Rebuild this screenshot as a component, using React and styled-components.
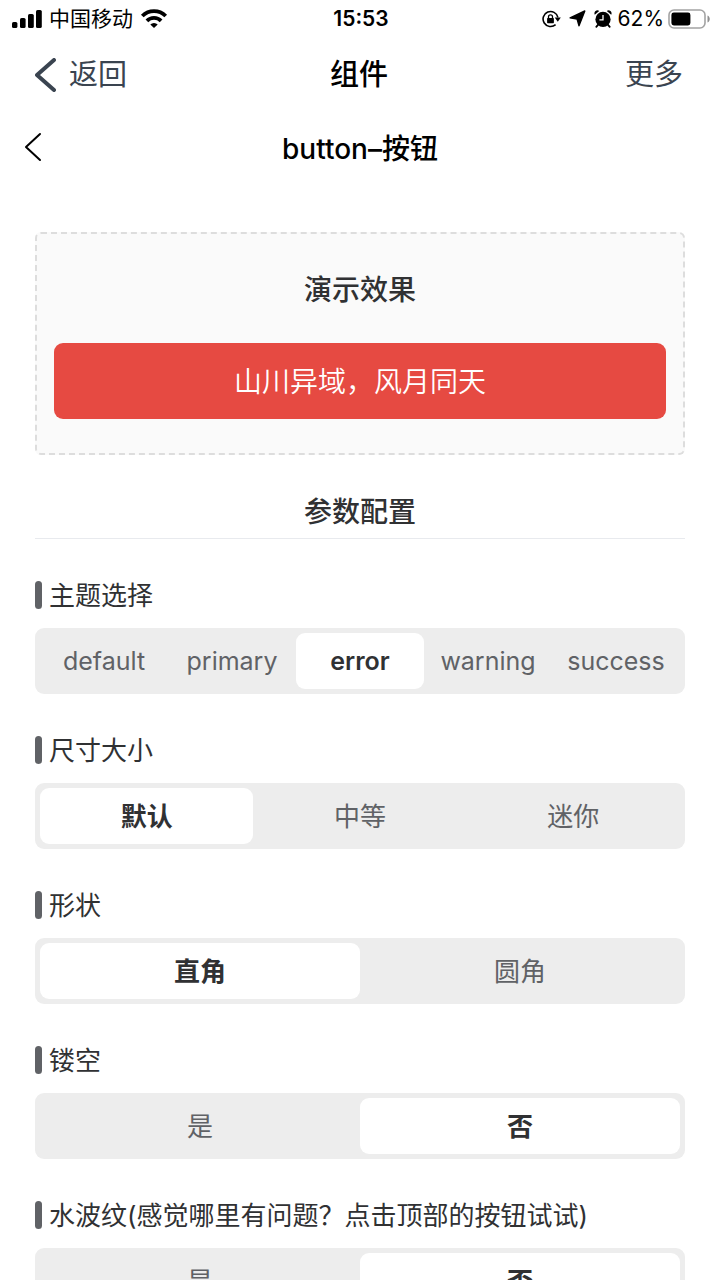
import React from "react";
import styled, { createGlobalStyle } from "styled-components";

const GlobalStyle = createGlobalStyle`
  *, *::before, *::after { box-sizing: border-box; }
  html { scrollbar-width: none; }
  html::-webkit-scrollbar { display: none; }
  body {
    margin: 0;
    background: #fff;
    color: #303133;
    font-family: Inter, "Noto Sans CJK SC", sans-serif;
    font-size: 26px;
    overflow-x: hidden;
  }
  button { font: inherit; color: inherit; border: 0; background: none; padding: 0; cursor: pointer; }
`;

const StatusBar = styled.div`
  display: grid;
  grid-template-columns: 1fr auto 1fr;
  align-items: center;
  height: 37px;
  padding: 0 10px 0 12px;
  color: #000;
  font-size: 21px;
  line-height: 30px;
`;

const StatusGroup = styled.div`
  display: flex;
  align-items: center;
  justify-content: ${(p) => (p.$end ? "flex-end" : "flex-start")};
  gap: ${(p) => (p.$end ? "4px" : "7px")};
  svg { display: block; flex: none; }
`;

const StatusIcons = styled.span`
  display: flex;
  align-items: center;
  gap: 8px;
  margin-right: 2px;
`;

const Clock = styled.time`
  font-weight: 600;
`;

const NavBar = styled.header`
  display: grid;
  grid-template-columns: 1fr auto 1fr;
  align-items: center;
  height: 74px;
  padding: 2px 37px 0 35px;
  font-size: 29px;
  line-height: 40px;
`;

const NavButton = styled.button`
  display: flex;
  align-items: center;
  gap: 13px;
  justify-self: ${(p) => (p.$end ? "end" : "start")};
  && { color: #3a4450; }
`;

const NavTitle = styled.h1`
  margin: 0;
  color: #000;
  font-size: 29px;
  font-weight: 500;
`;

const PageHeader = styled.div`
  display: grid;
  grid-template-columns: 1fr auto 1fr;
  align-items: center;
  height: 75px;
  padding: 0 24px;
`;

const BackButton = styled.button`
  justify-self: start;
  && { color: #000; }
  svg { display: block; margin-bottom: 4px; }
`;

const PageTitle = styled.h2`
  margin: 0;
  color: #000;
  font-size: 28px;
  line-height: 40px;
  font-weight: 500;
`;

const Content = styled.main`
  padding: 46px 35px 42px;
`;

const Demo = styled.section`
  padding: 36px 17px 34px;
  border: 2px dashed #ddd;
  border-radius: 6px;
  background: #fafafa;
`;

const SectionTitle = styled.h3`
  margin: 0;
  font-size: 28px;
  line-height: 40px;
  font-weight: 500;
  text-align: center;
`;

const DemoButton = styled.button`
  && {
    display: block;
    width: 100%;
    height: 76px;
    margin-top: 33px;
    padding-bottom: 2px;
    border-radius: 9px;
    background: #e64a42;
    color: #fff;
    font-size: 28px;
    font-weight: 350;
  }
`;

const ConfigHeading = styled.div`
  margin-top: 37px;
  padding-bottom: 6px;
  border-bottom: 1px solid #e8eaee;
`;

const Field = styled.fieldset`
  min-width: 0;
  margin: 42px 0 0;
  padding: 0;
  border: 0;
`;

const FieldLabel = styled.legend`
  display: flex;
  align-items: center;
  gap: 7px;
  height: 28px;
  margin-bottom: 19px;
  padding: 0;
  font-size: 26px;
  line-height: 28px;
  white-space: nowrap;
  &::before {
    content: "";
    width: 7px;
    height: 28px;
    border-radius: 4px;
    background: #606266;
  }
`;

const Segments = styled.div`
  display: flex;
  padding: 5px;
  border-radius: 9px;
  background: #ededed;
`;

const Segment = styled.label`
  flex: 1 1 0;
  min-width: 0;
  height: 56px;
  border-radius: 9px;
  color: #606266;
  font-size: ${(p) => (p.$latin ? "25px" : "26px")};
  line-height: ${(p) => (p.$latin ? "56px" : "58px")};
  text-align: center;
  cursor: pointer;
  &:has(input:checked) {
    background: #fff;
    color: #303133;
    font-weight: ${(p) => (p.$latin ? 600 : 700)};
  }
`;

const Radio = styled.input`
  appearance: none;
  width: 0;
  height: 0;
  margin: 0;
  display: block;
`;

const SignalIcon = () => (
  <svg width="30" height="18" viewBox="0 0 30 18" aria-hidden="true">
    <rect x="0" y="12" width="5.4" height="6" rx="1.6" />
    <rect x="8" y="8" width="5.6" height="10" rx="1.6" />
    <rect x="16" y="4" width="5.8" height="14" rx="1.6" />
    <rect x="24" y="0" width="5.8" height="18" rx="1.6" />
  </svg>
);

const WifiIcon = () => (
  <svg width="28" height="19" viewBox="0 0 28 19" fill="none" stroke="#000" strokeWidth="3.8" aria-hidden="true">
    <path d="M2.3 7a16.6 16.6 0 0 1 23.4 0" />
    <path d="M6.9 11.8a10 10 0 0 1 14.2 0" />
    <path d="M14 19l-3.7-3.5a5.3 5.3 0 0 1 7.4 0z" fill="#000" stroke="none" />
  </svg>
);

const RotationLockIcon = () => (
  <svg width="19" height="18" viewBox="0 0 19 18" fill="none" stroke="#000" strokeWidth="1.6" aria-hidden="true">
    <path d="M15.9 7.4A7.5 7.5 0 1 0 13.6 14.6" />
    <path d="M12.7 7.6h6.1l-3 4.2z" fill="#000" stroke="none" />
    <rect x="5.1" y="8" width="6.8" height="5.2" rx=".7" fill="#000" stroke="none" />
    <path d="M6.5 8.3V6.8a2 2 0 0 1 4 0v1.5" strokeWidth="1.3" />
  </svg>
);

const LocationIcon = () => (
  <svg width="17" height="17" viewBox="0 0 17 17" aria-hidden="true">
    <path d="M15.8 1 10 15.8 8.1 9 1.1 7.9z" stroke="#000" strokeWidth="1.4" strokeLinejoin="round" />
  </svg>
);

const AlarmIcon = () => (
  <svg width="18" height="18" viewBox="0 0 18 18" aria-hidden="true">
    <path d="M.8 4.7A3 3 0 0 1 5.2.9zM17.2 4.7A3 3 0 0 0 12.8.9z" />
    <circle cx="9" cy="9.4" r="7.6" />
    <path d="m4.4 14.3-2.1 2.5M13.6 14.3l2.1 2.5" stroke="#000" strokeWidth="1.8" strokeLinecap="round" />
    <path d="M9 5v4.9H5.4" fill="none" stroke="#fff" strokeWidth="1.3" />
  </svg>
);

const BatteryIcon = () => (
  <svg width="42" height="20" viewBox="0 0 42 20" aria-hidden="true">
    <rect x="1" y="1" width="36" height="18" rx="5" fill="none" stroke="#a3a3a3" strokeWidth="1.6" />
    <rect x="3.4" y="3.6" width="19" height="12.8" rx="2.4" />
    <path d="M39.5 6.5c3 1.2 3 5.8 0 7z" fill="#8f8f8f" />
  </svg>
);

const Chevron = ({ width, height, stroke }) => (
  <svg width={width} height={height} fill="none" stroke="currentColor" strokeWidth={stroke} strokeLinecap="round" strokeLinejoin="round" aria-hidden="true">
    <path d={`M${width - 2} 2 2 ${height / 2}l${width - 4} ${height / 2 - 2}`} />
  </svg>
);

const fields = [
  { id: "theme", label: "主题选择", options: ["default", "primary", "error", "warning", "success"], selected: 2, latin: true },
  { id: "size", label: "尺寸大小", options: ["默认", "中等", "迷你"], selected: 0 },
  { id: "shape", label: "形状", options: ["直角", "圆角"], selected: 0 },
  { id: "plain", label: "镂空", options: ["是", "否"], selected: 1 },
  { id: "ripple", label: "水波纹(感觉哪里有问题？点击顶部的按钮试试)", options: ["是", "否"], selected: 1 },
];

const LabelText = styled.span`
  padding-top: 2px;
`;

const SegmentedField = ({ id, label, options, selected, latin }) => (
  <Field>
    <FieldLabel>
      <LabelText>{label}</LabelText>
    </FieldLabel>
    <Segments>
      {options.map((option, i) => (
        <Segment key={option} $latin={latin}>
          <Radio type="radio" name={id} value={option} defaultChecked={i === selected} />
          {option}
        </Segment>
      ))}
    </Segments>
  </Field>
);

export default function App() {
  return (
    <div lang="zh-CN">
      <GlobalStyle />
      <StatusBar>
        <StatusGroup>
          <SignalIcon />
          <span>中国移动</span>
          <WifiIcon />
        </StatusGroup>
        <Clock>15:53</Clock>
        <StatusGroup $end>
          <StatusIcons>
            <RotationLockIcon />
            <LocationIcon />
            <AlarmIcon />
          </StatusIcons>
          <span>62%</span>
          <BatteryIcon />
        </StatusGroup>
      </StatusBar>
      <NavBar>
        <NavButton type="button">
          <Chevron width={21} height={34} stroke={4} />
          返回
        </NavButton>
        <NavTitle>组件</NavTitle>
        <NavButton type="button" $end>更多</NavButton>
      </NavBar>
      <PageHeader>
        <BackButton type="button" aria-label="返回">
          <Chevron width={18} height={30} stroke={2} />
        </BackButton>
        <PageTitle>button–按钮</PageTitle>
      </PageHeader>
      <Content>
        <Demo>
          <SectionTitle>演示效果</SectionTitle>
          <DemoButton type="button">山川异域，风月同天</DemoButton>
        </Demo>
        <ConfigHeading>
          <SectionTitle>参数配置</SectionTitle>
        </ConfigHeading>
        {fields.map((field) => (
          <SegmentedField key={field.id} {...field} />
        ))}
      </Content>
    </div>
  );
}
